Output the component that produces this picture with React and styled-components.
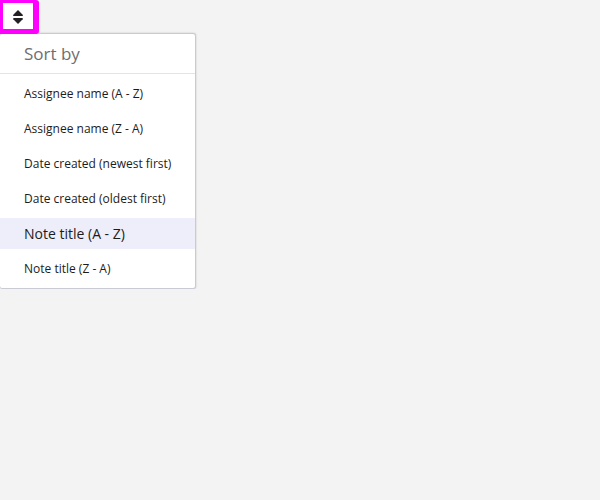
import React from "react";
import styled, { createGlobalStyle } from "styled-components";

const GlobalStyle = createGlobalStyle`
  *, *::before, *::after { box-sizing: border-box; }
  body {
    margin: 0;
    background: #f3f3f3;
    color: #1c1c1c;
    font-family: "Open Sans", sans-serif;
  }
`;

const SortControl = styled.div`
  display: flex;
  flex-direction: column;
  align-items: flex-start;
`;

const SortButton = styled.button`
  display: flex;
  align-items: center;
  justify-content: center;
  z-index: 1;
  width: 39px;
  height: 34px;
  margin-bottom: -1px;
  padding: 2px 0 0;
  border: solid #f0f;
  border-width: 3px 6px 5px 3px;
  border-radius: 0 3px 3px 0;
  background: #fff;
  color: #222;
  cursor: pointer;
`;

const Menu = styled.div`
  padding-bottom: 4px;
  border: 1px solid #c9cad3;
  border-left: 0;
  border-radius: 3px;
  background: #fff;
  box-shadow: 0 0 2px rgba(0, 0, 0, 0.2);
`;

const MenuTitle = styled.h2`
  margin: 0 0 4px;
  padding: 0 24px;
  border-bottom: 1px solid #e3e3e3;
  color: #6e6e6e;
  font-size: 17px;
  font-weight: 400;
  line-height: 39px;
`;

const Options = styled.div`
  display: flex;
  flex-direction: column;
  gap: 4px;
`;

const Option = styled.button`
  padding: 0 24px;
  border: 0;
  background: ${({ $selected }) => ($selected ? "#eeeefa" : "transparent")};
  color: inherit;
  font-family: inherit;
  font-size: ${({ $selected }) => ($selected ? "14px" : "12px")};
  line-height: 31px;
  text-align: left;
  white-space: nowrap;
  cursor: pointer;
`;

const options = [
  "Assignee name (A - Z)",
  "Assignee name (Z - A)",
  "Date created (newest first)",
  "Date created (oldest first)",
  "Note title (A - Z)",
  "Note title (Z - A)",
];

export default function App() {
  const [selected, setSelected] = React.useState("Note title (A - Z)");
  return (
    <SortControl>
      <GlobalStyle />
      <SortButton type="button" aria-label="Sort by" aria-haspopup="menu" aria-expanded="true">
        <svg width="10" height="14" viewBox="0 0 10 14" fill="currentColor" aria-hidden="true">
          <path d="M5 0 9.7 4.8Q10.3 6 9 6H1Q-.3 6 .3 4.8Z" />
          <path d="M1 8H9Q10.3 8 9.7 9.2L5 14 .3 9.2Q-.3 8 1 8Z" />
        </svg>
      </SortButton>
      <Menu>
        <MenuTitle id="sort-title">Sort by</MenuTitle>
        <Options role="menu" aria-labelledby="sort-title">
          {options.map((name) => (
            <Option
              key={name}
              type="button"
              role="menuitemradio"
              aria-checked={selected === name}
              $selected={selected === name}
              onClick={() => setSelected(name)}
            >
              {name}
            </Option>
          ))}
        </Options>
      </Menu>
    </SortControl>
  );
}
